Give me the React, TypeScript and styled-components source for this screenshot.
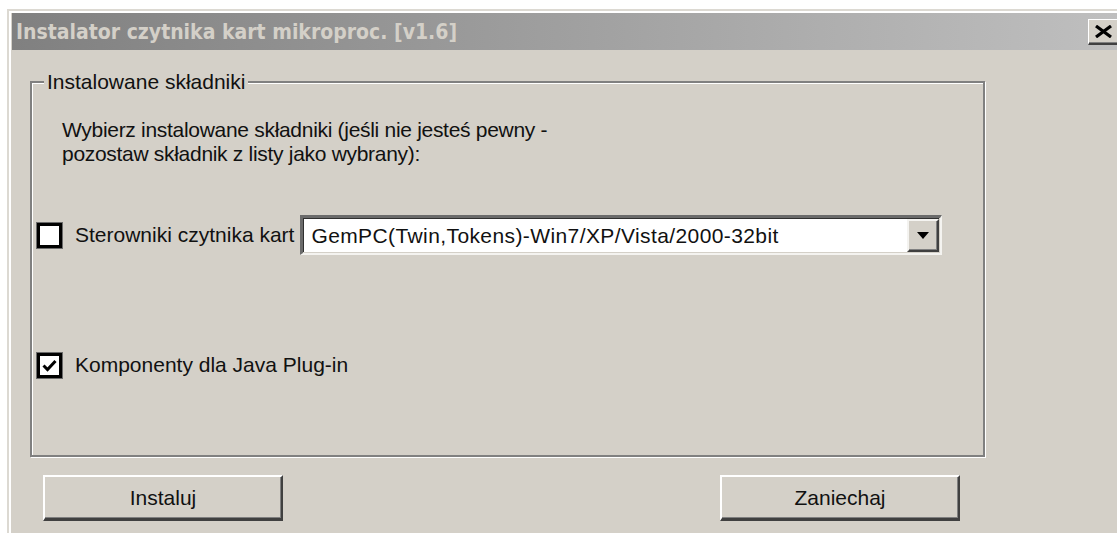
import styled, { createGlobalStyle } from "styled-components";

const GlobalStyle = createGlobalStyle`
  html, body {
    margin: 0;
    padding: 0;
    background: #fff;
    overflow: hidden;
  }
  body {
    width: 1117px;
    height: 533px;
  }
`;

const Window = styled.div`
  margin: 9px 0 0 7px;
  width: 1130px;
  height: 524px;
  box-sizing: border-box;
  background: #d4d0c8;
  border-top: 2px solid #dcd9d2;
  border-left: 2px solid #dcd9d2;
  box-shadow: inset 2px 2px 0 #fff;
  padding: 2px 0 0 3px;
  display: flex;
  flex-direction: column;
  font-family: "Liberation Sans", Arial, sans-serif;
  color: #111;
`;

const TitleBar = styled.div`
  height: 37px;
  flex: none;
  display: flex;
  align-items: center;
  justify-content: space-between;
  padding: 0 15px 0 4px;
  background: linear-gradient(to right, #808080, #c0c0c0);
`;

const Title = styled.span`
  font-family: "DejaVu Sans Condensed", "DejaVu Sans", Verdana, sans-serif;
  font-weight: bold;
  font-size: 21px;
  color: #d4d0c8;
  white-space: nowrap;
`;

const CloseButton = styled.button`
  width: 34px;
  height: 26px;
  padding: 0 4px 0 0;
  box-sizing: border-box;
  display: flex;
  align-items: center;
  justify-content: center;
  background: #d4d0c8;
  border: none;
  border-top: 1px solid #fff;
  border-left: 1px solid #fff;
  border-right: 1px solid #404040;
  border-bottom: 2px solid #404040;
  box-shadow: inset -1px -1px 0 #808080;
`;

const Body = styled.div`
  flex: 1;
  padding-left: 18px;
  display: flex;
  flex-direction: column;
`;

const Group = styled.fieldset`
  margin: 20px 0 0 0;
  width: 955px;
  height: 387px;
  box-sizing: border-box;
  padding: 0 0 0 5px;
  border: 2px solid #808080;
  box-shadow: inset 1px 1px 0 #fff, 1px 1px 0 #fff;
  display: flex;
  flex-direction: column;
`;

const Legend = styled.legend`
  margin-left: 7px;
  padding: 0 3px;
  font-size: 21px;
  line-height: 24px;
  background: #d4d0c8;
`;

const Description = styled.p`
  margin: 24px 0 0 25px;
  font-size: 21px;
  line-height: 24px;
  letter-spacing: -0.3px;
`;

const OptionRow = styled.div<{ $top: number }>`
  margin-top: ${(p) => p.$top}px;
  height: 40px;
  display: flex;
  align-items: center;
`;

const CheckBox = styled.span`
  width: 25px;
  height: 25px;
  flex: none;
  box-sizing: border-box;
  background: #fff;
  border: 3px solid #000;
  box-shadow: 0 0 0 1px #6b6b6b;
  display: flex;
  align-items: center;
  justify-content: center;
`;

const OptionLabel = styled.span`
  margin-left: 13px;
  font-size: 21px;
  white-space: nowrap;
`;

const Combo = styled.div`
  margin-left: 6px;
  width: 642px;
  height: 40px;
  box-sizing: border-box;
  display: flex;
  align-items: center;
  background: #fff;
  border-top: 3px solid #6b6b6b;
  border-left: 3px solid #6b6b6b;
  border-right: 2px solid #f4f3f0;
  border-bottom: 2px solid #f4f3f0;
  box-shadow: inset -1px -1px 0 #d4d0c8, inset 1px 1px 0 #303030;
`;

const ComboText = styled.span`
  flex: 1;
  padding-left: 8px;
  font-size: 21px;
  letter-spacing: 0.4px;
  white-space: nowrap;
`;

const ComboArrow = styled.span`
  width: 32px;
  height: 33px;
  margin-right: 1px;
  box-sizing: border-box;
  display: flex;
  align-items: center;
  justify-content: center;
  background: #d4d0c8;
  border-top: 2px solid #f4f3f0;
  border-left: 2px solid #f4f3f0;
  border-right: 2px solid #404040;
  border-bottom: 2px solid #404040;
  box-shadow: inset -1px -1px 0 #808080;
`;

const Actions = styled.div`
  margin: 18px 0 0 13px;
  display: flex;
  gap: 437px;
`;

const Button = styled.button`
  width: 240px;
  height: 46px;
  box-sizing: border-box;
  background: #d4d0c8;
  font-family: "Liberation Sans", Arial, sans-serif;
  font-size: 21px;
  color: #111;
  border-top: 2px solid #fff;
  border-left: 2px solid #fff;
  border-right: 2px solid #404040;
  border-bottom: 3px solid #404040;
  box-shadow: inset -1px -1px 0 #808080;
  padding: 0;
`;

export default function App() {
  return (
    <>
      <GlobalStyle />
      <Window>
        <TitleBar>
          <Title>Instalator czytnika kart mikroproc. [v1.6]</Title>
          <CloseButton aria-label="Zamknij">
            <svg width="19" height="13" viewBox="0 0 19 13">
              <path d="M2 1 L17 12 M17 1 L2 12" stroke="#000" strokeWidth="3.2" />
            </svg>
          </CloseButton>
        </TitleBar>
        <Body>
          <Group>
            <Legend>Instalowane składniki</Legend>
            <Description>
              Wybierz instalowane składniki (jeśli nie jesteś pewny -
              <br />
              pozostaw składnik z listy jako wybrany):
            </Description>
            <OptionRow $top={49}>
              <CheckBox />
              <OptionLabel>Sterowniki czytnika kart</OptionLabel>
              <Combo>
                <ComboText>GemPC(Twin,Tokens)-Win7/XP/Vista/2000-32bit</ComboText>
                <ComboArrow>
                  <svg width="12" height="7" viewBox="0 0 12 7">
                    <path d="M0 0 H12 L6 7 Z" fill="#000" />
                  </svg>
                </ComboArrow>
              </Combo>
            </OptionRow>
            <OptionRow $top={90}>
              <CheckBox>
                <svg width="15" height="13" viewBox="0 0 15 13">
                  <path d="M1.5 6.5 L5.5 10.5 L13.5 2" stroke="#000" strokeWidth="3" fill="none" />
                </svg>
              </CheckBox>
              <OptionLabel>Komponenty dla Java Plug-in</OptionLabel>
            </OptionRow>
          </Group>
          <Actions>
            <Button>Instaluj</Button>
            <Button>Zaniechaj</Button>
          </Actions>
        </Body>
      </Window>
    </>
  );
}
